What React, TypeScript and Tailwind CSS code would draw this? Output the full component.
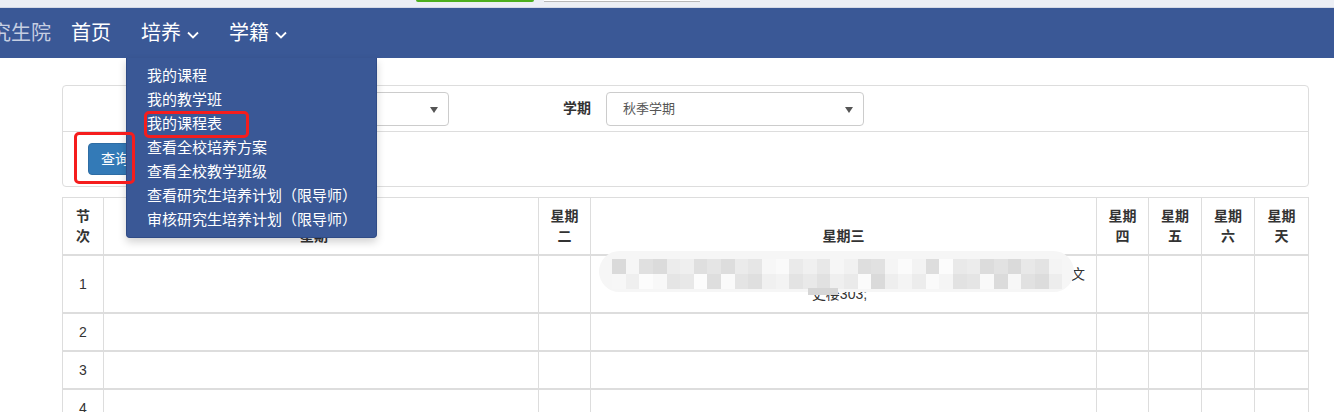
const font = "font-['Liberation_Sans','Noto_Sans_CJK_SC',sans-serif]";

const menu = [
  "我的课程",
  "我的教学班",
  "我的课程表",
  "查看全校培养方案",
  "查看全校教学班级",
  "查看研究生培养计划（限导师）",
  "审核研究生培养计划（限导师）",
];

const cols = [41, 435, 52, 506, 52, 53, 53, 54];

// mosaic tile shades for the blurred course text
function shade(row: number, i: number) {
  const v = (i * 53 + row * 29 + ((i * i) % 7) * 11) % 36;
  const c = 0xda + v;
  const h = Math.min(c, 0xfc).toString(16);
  return `#${h}${h}${h}`;
}

function Caret() {
  return (
    <svg width="12" height="8" viewBox="0 0 12 8" className="ml-[6px] mt-[3px]">
      <polyline points="1,1.5 6,6.5 11,1.5" fill="none" stroke="currentColor" strokeWidth="1.8" />
    </svg>
  );
}

function Mosaic() {
  return (
    <div className="pointer-events-none absolute left-[8px] top-[-5px] h-[41px] w-[475px] rounded-full bg-[#f6f6f6]">
      <div className="absolute left-[13px] top-[8px] flex w-[450px] flex-col">
        {[0, 1].map((r) => (
          <div key={r} className="flex h-[15px]">
            {Array.from({ length: 33 }).map((_, i) => (
              <div key={i} className="h-full flex-1" style={{ backgroundColor: shade(r, i) }} />
            ))}
          </div>
        ))}
      </div>
      <div className="absolute left-[209px] top-[37px] h-[7px] w-[30px] bg-[#d6d6d6]" />
    </div>
  );
}

function Select({ value, className }: { value?: string; className: string }) {
  return (
    <div
      className={`relative flex h-[34px] items-center rounded-[4px] border border-[#ccc] bg-white pl-[16px] text-[13px] text-[#555] ${className}`}
    >
      {value}
      <span className="absolute right-[10px] top-[14px] h-0 w-0 border-x-[4px] border-t-[6px] border-x-transparent border-t-[#555]" />
    </div>
  );
}

export default function App() {
  const head = ["节次", "星期一", "星期二", "星期三", "星期四", "星期五", "星期六", "星期天"];

  return (
    <div className={`relative min-h-[412px] w-[1334px] overflow-hidden bg-white text-[#333] ${font}`}>
      {/* browser strip */}
      <div className="relative h-[8px] border-b border-[#d5dae6] bg-[#eceff5]">
        <div className="absolute left-[416px] top-0 h-[2px] w-[118px] rounded-b-[2px] bg-[#4caf1e]" />
        <div className="absolute left-[544px] top-0 h-[2px] w-[156px] border-b border-[#b8b8b8] bg-white" />
      </div>

      {/* nav */}
      <nav className="relative z-20 flex h-[50px] items-center bg-[#3a5896] text-[20px]">
        <span className="ml-[-29px] mr-[5px] text-[#c6cfe2]">研究生院</span>
        <span className="px-[15px] text-white">首页</span>
        <div className="relative flex h-full items-center px-[15px] text-white">
          培养
          <Caret />
          <div className="absolute left-0 top-[50px] w-[251px] rounded-b-[4px] border border-t-0 border-[#2f4b86] bg-[#3a5896] pb-[5px] pt-[6px] shadow-[0_4px_8px_rgba(0,0,0,0.18)]">
            {menu.map((m) => (
              <div key={m} className="h-[24px] pl-[20px] text-[15px] leading-[24px] text-white">
                {m}
              </div>
            ))}
            <div className="absolute left-[17px] top-[53px] h-[27px] w-[105px] rounded-[5px] border-[3px] border-[#f51d1d]" />
          </div>
        </div>
        <div className="flex h-full items-center px-[15px] text-white">
          学籍
          <Caret />
        </div>
      </nav>

      <div className="ml-[62px] mr-[25px] pt-[27px]">
        {/* search panel */}
        <div className="relative rounded-[4px] border border-[#ddd]">
          <div className="flex h-[46px] items-center border-b border-[#ddd] text-[14px]">
            <span className="ml-[84px] w-[30px] font-bold">学年</span>
            <Select className="ml-[14px] w-[258px]" />
            <span className="ml-[114px] w-[30px] font-bold">学期</span>
            <Select value="秋季学期" className="ml-[13px] w-[258px]" />
          </div>
          <div className="flex h-[54px] items-center pl-[25px]">
            <button className="h-[32px] rounded-[4px] border border-[#2e6da4] bg-[#337ab7] px-[12px] text-[14px] text-white">
              查询
            </button>
          </div>
          <div className="absolute left-[11px] top-[46px] z-30 h-[52px] w-[61px] rounded-[5px] border-[3px] border-[#f51d1d]" />
        </div>

        {/* timetable */}
        <table className="mt-[10px] w-[1247px] table-fixed border-collapse text-[14px] leading-[20px]">
          <colgroup>
            {cols.map((w, i) => (
              <col key={i} style={{ width: w }} />
            ))}
          </colgroup>
          <thead>
            <tr>
              {head.map((h) => (
                <th
                  key={h}
                  className="border border-b-2 border-[#ddd] px-[8px] py-[8px] text-center align-bottom font-bold"
                >
                  {h}
                </th>
              ))}
            </tr>
          </thead>
          <tbody>
            {[1, 2, 3, 4].map((n) => (
              <tr key={n}>
                <td className="border border-t-2 border-[#ddd] p-[8px] text-center align-middle">{n}</td>
                {cols.slice(1).map((_, i) => (
                  <td
                    key={i}
                    className="relative border border-t-2 border-[#ddd] p-[8px] text-center align-middle text-[13px]"
                  >
                    {n === 1 && i === 2 ? (
                      <>
                        <div className="flex justify-end pr-[3px] text-[14px]">文</div>
                        <div className="pr-[8px] text-[14px]">史楼303;</div>
                        <Mosaic />
                      </>
                    ) : null}
                  </td>
                ))}
              </tr>
            ))}
          </tbody>
        </table>
      </div>
    </div>
  );
}
